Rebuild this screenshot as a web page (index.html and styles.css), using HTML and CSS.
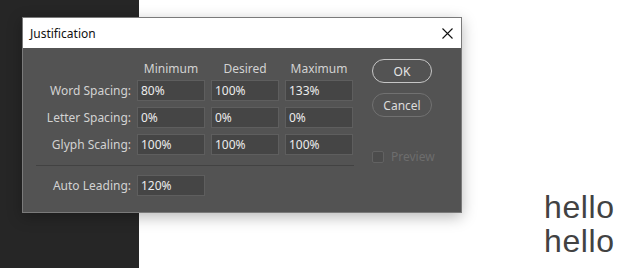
FILE: index.html
```html
<!DOCTYPE html>
<html lang="en">
<head>
  <meta charset="UTF-8">
  <meta name="viewport" content="width=device-width, initial-scale=1.0">
  <title>Justification</title>
  <link rel="stylesheet" href="styles.css">
</head>
<body>
  <div class="page">
    <div class="sidebar"></div>
    <main class="canvas">
      <p class="sample">hello<br>hello</p>
    </main>

    <!-- Justification dialog -->
    <div class="dialog">
      <div class="titlebar">
        <span class="title">Justification</span>
        <button class="close" type="button" aria-label="Close">
          <svg width="11" height="11" viewBox="0 0 11 11"><path d="M0.5 0.5L10.5 10.5M10.5 0.5L0.5 10.5" stroke="#111" stroke-width="1.1" fill="none"/></svg>
        </button>
      </div>
      <div class="dialog-body">
        <div class="fields">
          <div class="col-heads">
            <span>Minimum</span>
            <span>Desired</span>
            <span>Maximum</span>
          </div>
          <div class="grid">
            <label for="wsMin">Word Spacing:</label>
            <input type="text" id="wsMin" value="80%">
            <input type="text" value="100%">
            <input type="text" value="133%">

            <label for="lsMin">Letter Spacing:</label>
            <input type="text" id="lsMin" value="0%">
            <input type="text" value="0%">
            <input type="text" value="0%">

            <label for="gsMin">Glyph Scaling:</label>
            <input type="text" id="gsMin" value="100%">
            <input type="text" value="100%">
            <input type="text" value="100%">
          </div>
          <div class="divider"></div>
          <div class="grid">
            <label for="autoLeading">Auto Leading:</label>
            <input type="text" id="autoLeading" value="120%">
          </div>
        </div>
        <div class="actions">
          <button class="btn btn-primary" type="button">OK</button>
          <button class="btn" type="button">Cancel</button>
          <label class="preview"><span class="box"></span>Preview</label>
        </div>
      </div>
    </div>
  </div>
</body>
</html>
```

FILE: styles.css
```css
html, body {
  margin: 0;
  height: 100%;
}
body {
  font-family: "Noto Sans", "Open Sans", sans-serif;
  font-size: 12px;
  overflow: hidden;
}
.page {
  position: relative;
  display: flex;
  height: 268px;
  background: #fff;
}
.sidebar {
  width: 139px;
  background: #262626;
}
.canvas {
  flex: 1;
  padding: 190px 0 0 405px;
}
.sample {
  margin: 0;
  font-family: "Liberation Sans", Arial, sans-serif;
  font-size: 32px;
  line-height: 34px;
  letter-spacing: 0.6px;
  color: #424242;
}

/* dialog window */
.dialog {
  position: absolute;
  left: 22px;
  top: 17px;
  width: 438px;
  height: 194px;
  border: 1px solid #7a7a7a;
  background: #535353;
  box-shadow: 0 4px 14px rgba(0, 0, 0, 0.28);
}
.titlebar {
  display: flex;
  align-items: center;
  justify-content: space-between;
  height: 30px;
  padding: 0 8px 0 7px;
  background: #fff;
}
.title {
  color: #111;
  font-size: 12px;
}
.close {
  display: flex;
  padding: 0;
  border: none;
  background: none;
}
.dialog-body {
  display: flex;
  padding-top: 13px;
}
.fields {
  width: 330px;
}
.col-heads {
  display: grid;
  grid-template-columns: 68px 68px 68px;
  column-gap: 6px;
  margin: 0 0 3px 114px;
  line-height: 16px;
  color: #d2d2d2;
  text-align: center;
}
.grid {
  display: grid;
  grid-template-columns: 108px 68px 68px 68px;
  grid-auto-rows: 21px;
  column-gap: 6px;
  row-gap: 6px;
}
.grid label {
  line-height: 21px;
  text-align: right;
  color: #d2d2d2;
}
.grid input {
  box-sizing: border-box;
  width: 68px;
  height: 21px;
  margin: 0;
  padding: 0 3px;
  border: 1px solid #5e5e5e;
  background: #454545;
  color: #ececec;
  font-family: inherit;
  font-size: 12px;
  outline: none;
}
.divider {
  height: 1px;
  margin: 10px 0 9px 13px;
  width: 318px;
  background: #424242;
}

/* buttons column */
.actions {
  display: flex;
  flex-direction: column;
  margin-left: 19px;
  margin-top: -2px;
}
.btn {
  box-sizing: border-box;
  width: 60px;
  height: 24px;
  margin-bottom: 10px;
  padding: 0;
  border: 1px solid #717171;
  border-radius: 12px;
  background: transparent;
  color: #dcdcdc;
  font-family: inherit;
  font-size: 12px;
}
.btn-primary {
  border: 1.5px solid #c6c6c6;
  color: #e6e6e6;
}
.preview {
  display: flex;
  align-items: center;
  gap: 7px;
  margin-top: 21px;
  color: #6d6d6d;
}
.box {
  box-sizing: border-box;
  width: 12px;
  height: 12px;
  border: 1px solid #626262;
  border-radius: 2px;
  background: #4c4c4c;
}
```
